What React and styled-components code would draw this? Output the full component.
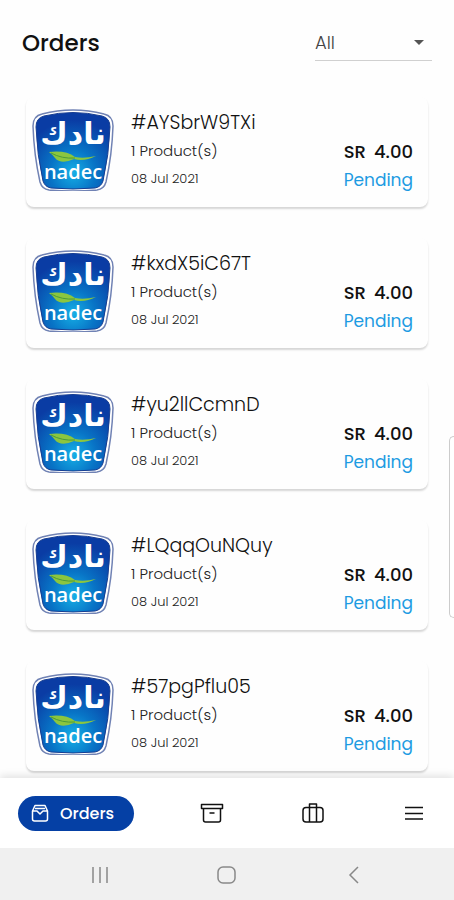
import styled, { createGlobalStyle } from "styled-components";

const orders = [
  { id: "AYSbrW9TXi", products: 1, date: "08 Jul 2021", total: "4.00", status: "Pending" },
  { id: "kxdX5iC67T", products: 1, date: "08 Jul 2021", total: "4.00", status: "Pending" },
  { id: "yu2llCcmnD", products: 1, date: "08 Jul 2021", total: "4.00", status: "Pending" },
  { id: "LQqqOuNQuy", products: 1, date: "08 Jul 2021", total: "4.00", status: "Pending" },
  { id: "57pgPflu05", products: 1, date: "08 Jul 2021", total: "4.00", status: "Pending" },
];

export default function App() {
  return (
    <Screen>
      <GlobalStyle />
      <Content>
        <Header>
          <Title>Orders</Title>
          <Filter>
            <FilterSelect aria-label="Filter orders" defaultValue="All">
              <option>All</option>
              <option>Pending</option>
              <option>Delivered</option>
            </FilterSelect>
            <Caret viewBox="0 0 10 5" aria-hidden="true">
              <path d="M0 0h10L5 5z" fill="#555" />
            </Caret>
          </Filter>
        </Header>
        <OrderList>
          {orders.map((order) => (
            <OrderCard key={order.id} order={order} />
          ))}
        </OrderList>
      </Content>
      <TabBar>
        <ActiveTab type="button" aria-current="page">
          <TrayIcon />
          Orders
        </ActiveTab>
        <TabGroup>
          <Tab type="button" aria-label="Archive">
            <ArchiveIcon />
          </Tab>
          <Tab type="button" aria-label="Products">
            <SuitcaseIcon />
          </Tab>
          <Tab type="button" aria-label="Menu">
            <MenuIcon />
          </Tab>
        </TabGroup>
      </TabBar>
      <SystemBar>
        <SystemButton type="button" aria-label="Recent apps">
          <RecentsIcon />
        </SystemButton>
        <SystemButton type="button" aria-label="Home">
          <HomeIcon />
        </SystemButton>
        <SystemButton type="button" aria-label="Back">
          <BackIcon />
        </SystemButton>
      </SystemBar>
      <EdgeHandle />
    </Screen>
  );
}

function OrderCard({ order }) {
  return (
    <Card>
      <NadecLogo />
      <Details>
        <OrderId>#{order.id}</OrderId>
        <Products>{order.products} Product(s)</Products>
        <OrderDate>{order.date}</OrderDate>
      </Details>
      <Summary>
        <Price>
          <span>SR</span>
          <span>{order.total}</span>
        </Price>
        <Status>{order.status}</Status>
      </Summary>
    </Card>
  );
}

function NadecLogo() {
  return (
    <Logo viewBox="0 0 82 82" role="img" aria-label="Nadec">
      <defs>
        <radialGradient id="nadecBlue" cx="0.5" cy="0.78" r="0.68">
          <stop offset="0" stopColor="#16b0e6" />
          <stop offset="0.45" stopColor="#0874c6" />
          <stop offset="1" stopColor="#0a3ca4" />
        </radialGradient>
      </defs>
      <path d="M10 5Q41-3 72 5Q81 7 81 17Q80 46 74 73Q72 80 65 81Q41 83 17 81Q10 80 8 73Q2 46 1 17Q1 7 10 5Z" fill="#fff" stroke="#7082b4" strokeWidth="1.5" />
      <path d="M12 7Q41 0 70 7Q78 9 78 18Q77 46 71 72Q69 78 63 79Q41 81 19 79Q13 78 11 72Q5 46 4 18Q4 9 12 7Z" fill="url(#nadecBlue)" stroke="#173d91" strokeWidth="1" />
      <LogoArabic x="41" y="35" textAnchor="middle">نادك</LogoArabic>
      <path d="M17 43Q34 41 43 48Q52 50 64 47Q52 53 42 50Q29 56 23 49Q21 46 17 43Z" fill="#8bc63f" />
      <path d="M19 44Q30 50 43 49" fill="none" stroke="#4b9b39" strokeWidth="1" />
      <LogoLatin x="41" y="70" textAnchor="middle">nadec</LogoLatin>
    </Logo>
  );
}

function TrayIcon() {
  return (
    <Icon viewBox="0 0 20 20" aria-hidden="true">
      <path d="M2.5 8L5 2.5H15L17.5 8V16Q17.5 18 15.5 18H4.5Q2.5 18 2.5 16ZM2.5 8H7L10 11L13 8H17.5M5 5.5H15" />
    </Icon>
  );
}

function ArchiveIcon() {
  return (
    <Icon $large viewBox="0 0 24 24" aria-hidden="true">
      <path d="M1.5 3.5H22.5V7.5H1.5ZM3.5 7.5V19Q3.5 21 5.5 21H18.5Q20.5 21 20.5 19V7.5M9.5 12H14.5" />
    </Icon>
  );
}

function SuitcaseIcon() {
  return (
    <Icon $large viewBox="0 0 24 24" aria-hidden="true">
      <path d="M5 6.5H19Q22 6.5 22 9.5V18Q22 21 19 21H5Q2 21 2 18V9.5Q2 6.5 5 6.5ZM8.5 21V3H15.5V21" />
    </Icon>
  );
}

function MenuIcon() {
  return (
    <Icon $large viewBox="0 0 24 24" aria-hidden="true">
      <path d="M3 6.5H21M3 12.5H21M3 18H21" />
    </Icon>
  );
}

function RecentsIcon() {
  return (
    <SystemIcon viewBox="0 0 24 24" aria-hidden="true">
      <path d="M5 4V20M12 4V20M19 4V20" />
    </SystemIcon>
  );
}

function HomeIcon() {
  return (
    <SystemIcon viewBox="0 0 24 24" aria-hidden="true">
      <rect x="3" y="4" width="17" height="16" rx="5" />
    </SystemIcon>
  );
}

function BackIcon() {
  return (
    <SystemIcon viewBox="0 0 24 24" aria-hidden="true">
      <path d="M16 4L8 12L16 20" />
    </SystemIcon>
  );
}

const GlobalStyle = createGlobalStyle`
  * {
    box-sizing: border-box;
  }

  body {
    margin: 0;
    background: #fefefe;
    color: #111;
    font-family: Poppins, Inter, sans-serif;
  }

  button,
  select {
    font: inherit;
    color: inherit;
    border: 0;
    background: none;
    padding: 0;
  }
`;

const Screen = styled.div`
  position: relative;
  display: flex;
  flex-direction: column;
  height: 100vh;
  overflow: hidden;
`;

const Content = styled.main`
  flex: 1;
  min-height: 0;
  overflow-y: auto;
  scrollbar-width: none;
`;

const Header = styled.header`
  display: flex;
  align-items: center;
  justify-content: space-between;
  padding: 25px 22px 0;
`;

const Title = styled.h1`
  margin: 0;
  font-size: 23px;
  line-height: 36px;
  font-weight: 500;
`;

const Filter = styled.div`
  display: flex;
  align-items: center;
  width: 117px;
  height: 36px;
  padding-right: 8px;
  border-bottom: 1px solid #d0d0d0;
`;

const FilterSelect = styled.select`
  flex: 1;
  appearance: none;
  color: #444;
  font-size: 18px;
  font-weight: 300;
  line-height: 36px;
`;

const Caret = styled.svg`
  width: 10px;
  height: 5px;
`;

const OrderList = styled.ul`
  display: flex;
  flex-direction: column;
  gap: 31px;
  list-style: none;
  margin: 0;
  padding: 36px 26px 7px;
`;

const Card = styled.li`
  display: flex;
  height: 110px;
  padding: 12px 15px 13px 6px;
  border-radius: 8px;
  background: #fefefe;
  box-shadow: 0 2px 2px rgba(0, 0, 0, 0.16);
`;

const Logo = styled.svg`
  width: 82px;
  height: 82px;
  flex-shrink: 0;
`;

const LogoArabic = styled.text`
  fill: #fff;
  font-family: "DejaVu Sans", sans-serif;
  font-size: 30px;
  font-weight: 700;
`;

const LogoLatin = styled.text`
  fill: #fff;
  font-family: "Liberation Sans Narrow", "Open Sans", sans-serif;
  font-size: 20px;
  font-weight: 600;
`;

const Details = styled.div`
  flex: 1;
  margin-left: 17px;
  font-weight: 300;
  line-height: 28px;
`;

const OrderId = styled.div`
  font-size: 19px;
`;

const Products = styled.div`
  font-size: 15px;
  color: #222;
`;

const OrderDate = styled.div`
  font-size: 13px;
  color: #222;
`;

const Summary = styled.div`
  display: flex;
  flex-direction: column;
  justify-content: flex-end;
  line-height: 28px;
`;

const Price = styled.div`
  display: flex;
  justify-content: space-between;
  font-size: 18px;
  font-weight: 500;
`;

const Status = styled.div`
  color: #1d9be2;
  font-size: 17px;
`;

const TabBar = styled.nav`
  position: relative;
  display: flex;
  align-items: center;
  height: 70px;
  padding: 0 28px 0 18px;
  background: #fff;
  box-shadow: 0 -2px 8px rgba(0, 0, 0, 0.12);
`;

const TabGroup = styled.div`
  display: flex;
  flex: 1;
  justify-content: space-between;
  margin-left: 66px;
`;

const Tab = styled.button`
  display: flex;
  align-items: center;
`;

const ActiveTab = styled(Tab)`
  gap: 10px;
  height: 35px;
  padding: 0 20px 0 12px;
  border-radius: 18px;
  background: #0540a5;
  color: #fff;
  font-size: 16px;
  font-weight: 500;
`;

const Icon = styled.svg`
  width: ${({ $large }) => ($large ? "24px" : "20px")};
  height: ${({ $large }) => ($large ? "24px" : "20px")};
  fill: none;
  stroke: currentColor;
  stroke-width: 1.5;
  stroke-linejoin: round;
`;

const SystemBar = styled.div`
  position: relative;
  display: flex;
  align-items: center;
  justify-content: space-between;
  height: 52px;
  padding: 2px 88px 0;
  background: #f0f0f0;
`;

const SystemButton = styled.button`
  display: flex;
  color: #888;
`;

const SystemIcon = styled.svg`
  width: 24px;
  height: 24px;
  fill: none;
  stroke: currentColor;
  stroke-width: 1.5;
`;

const EdgeHandle = styled.div`
  position: absolute;
  top: calc(50% - 14px);
  right: 0;
  width: 5px;
  height: 182px;
  border: 1px solid #ccc;
  border-right: 0;
  border-radius: 5px 0 0 5px;
  background: #fff;
`;
